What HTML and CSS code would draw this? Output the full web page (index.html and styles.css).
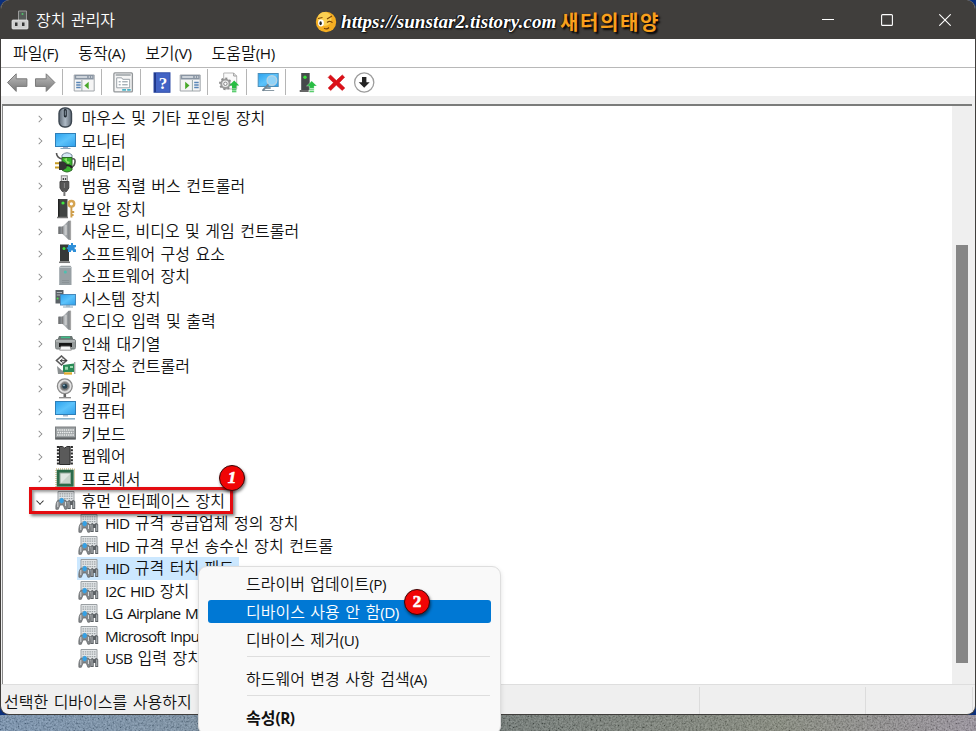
FILE: index.html
```
<!DOCTYPE html>
<html lang="ko">
<head>
  <meta charset="UTF-8" />
  <title>장치 관리자</title>
  <link rel="stylesheet" href="styles.css">
</head>
<body>

<!-- icon set -->
<svg class="defs" aria-hidden="true">
  <defs>
    <linearGradient id="gBlue" x1="0" y1="0" x2="1" y2="1"><stop offset="0" stop-color="#2ba2ee"/><stop offset="0.5" stop-color="#5cc3fb"/><stop offset="1" stop-color="#2f9fea"/></linearGradient>
    <linearGradient id="gGrey" x1="0" y1="0" x2="1" y2="0"><stop offset="0" stop-color="#5d6266"/><stop offset="0.5" stop-color="#b9bdc0"/><stop offset="1" stop-color="#686c6f"/></linearGradient>
    <linearGradient id="gArrow" x1="0" y1="0" x2="0" y2="1"><stop offset="0" stop-color="#bdbdbd"/><stop offset="1" stop-color="#777"/></linearGradient>
    <linearGradient id="gMouse" x1="0" y1="0" x2="1" y2="0"><stop offset="0" stop-color="#5d6874"/><stop offset="0.5" stop-color="#aebac6"/><stop offset="1" stop-color="#5d6874"/></linearGradient>

    <symbol id="mouse" viewBox="0 0 21 21">
      <rect x="4" y="1" width="12.5" height="19" rx="5.5" fill="url(#gMouse)" stroke="#3c4650" stroke-width="1.4"/>
      <rect x="8.8" y="2" width="3" height="8.5" rx="1.4" fill="#202831"/>
      <path d="M10.3 3.5v5" stroke="#8996a3"/>
    </symbol>
    <symbol id="monitor" viewBox="0 0 21 21">
      <rect x="0.5" y="3.5" width="20" height="13" fill="url(#gBlue)" stroke="#2e7fb8"/>
      <path d="M8 17h5v1.5H8z" fill="#9ac"/><path d="M5.5 18.5h10" stroke="#8aa7bd"/>
    </symbol>
    <symbol id="battery" viewBox="0 0 21 21">
      <path d="M7 6V3q5-4.5 10 0v3z" fill="#d5e8f5" stroke="#789"/>
      <path d="M7 5.5h10V18q-5 4-10 0z" fill="#39b52e" stroke="#2c6a25"/>
      <path d="M17 7q3.4-1 3 3t-3 5M1.5 1q0 4.5 5.5 6" fill="none" stroke="#555" stroke-width="1.6"/>
      <path d="M0 11.3h5M0 15.6h5" stroke="#c79c23" stroke-width="2"/>
      <path d="M4 9.5h4.5l3 2v4.5l-3 2H4z" fill="#333"/><path d="M11 13.5q4-1 6 2.5" fill="none" stroke="#222" stroke-width="2"/>
      <path d="M9 7l3-1v3l3 1-2 2z" fill="#8de06a"/>
    </symbol>
    <symbol id="usb" viewBox="0 0 21 21">
      <rect x="6.3" y="0.8" width="6" height="6" fill="#e2e2e2" stroke="#888"/>
      <path d="M7.7 3H9v2H7.7zM9.9 3h1.3v2H9.9z" fill="#444"/>
      <path d="M5 6.5h8.8v6.5l-2.3 3.5H7.3L5 13z" fill="#555" stroke="#444"/>
      <path d="M9.4 16v5" stroke="#777" stroke-width="2"/><path d="M9.4 8v5" stroke="#888"/>
    </symbol>
    <symbol id="security" viewBox="0 0 21 21">
      <path d="M3 1h9.5v18H3z" fill="#414443"/><path d="M3 1h1.5v18H3z" fill="#222"/>
      <circle cx="8" cy="5" r="1.6" fill="#3fe83f"/><path d="M2 19.5h11" stroke="#777" stroke-width="1.6"/>
      <circle cx="16.4" cy="5.8" r="2.8" fill="none" stroke="#d5a452" stroke-width="2.4"/>
      <path d="M16.4 9v10.5M16.4 14h2.8M16.4 17h2.2" stroke="#cf9f4c" stroke-width="1.9"/>
    </symbol>
    <symbol id="speaker" viewBox="0 0 21 21">
      <path d="M3.5 6.5h4L13.5 0.8H16v19h-2.5L7.5 14h-4z" fill="url(#gGrey)"/>
      <path d="M7.7 6.5V14M4 7v7" stroke="#777"/><path d="M15.3 1v18.5" stroke="#a5a5a5" stroke-width="1.6"/>
      <path d="M11 5v10" stroke="#ddd"/>
    </symbol>
    <symbol id="component" viewBox="0 0 21 21">
      <path d="M5 1.5h9v17H5z" fill="#353837"/><circle cx="9" cy="5.5" r="1.5" fill="#3fdc3f"/>
      <path d="M4 19.3h11" stroke="#777" stroke-width="1.5"/>
      <path d="M13 2h3V0h2v2h3v2.3h-1.3v2H21V9h-3V7.6h-2V9h-3V6.3h-1.2v-2H13z" fill="#2e8fd8"/>
    </symbol>
    <symbol id="software" viewBox="0 0 21 21">
      <path d="M6 0.7h9.5l1 1.5V20H4V2.2z" fill="#98a0a4"/><path d="M4 2.5h12.5" stroke="#bdc4c7"/>
      <path d="M4.5 3v16.5" stroke="#adb4b8"/><circle cx="10.3" cy="7" r="1.5" fill="#4dc0b1"/>
      <path d="M7 15.5h7M7 17.5h7" stroke="#8a9296"/>
    </symbol>
    <symbol id="system" viewBox="0 0 21 21">
      <path d="M0.5 2h8v13.5h-8z" fill="#5a6166"/><path d="M1.8 4.5H7M1.8 7H7" stroke="#b2b8bc"/>
      <circle cx="2.6" cy="10.5" r="1" fill="#4be14b"/>
      <rect x="5.5" y="6.5" width="15" height="10.5" fill="url(#gBlue)" stroke="#4688ba"/>
      <path d="M11 17.3h4v1h-4zM8 18.4h10v1H8z" fill="#8ba6b8"/>
    </symbol>
    <symbol id="printer" viewBox="0 0 21 21">
      <path d="M4 3h13l2 5H2z" fill="#6a7673"/><path d="M6 4.4h9" stroke="#3fbd88" stroke-width="1.6"/>
      <rect x="0.5" y="6.5" width="20" height="9.5" rx="1.5" fill="#969b9b" stroke="#7a8080"/>
      <path d="M1 8h19" stroke="#c8cccc"/><path d="M4 10h13v4H4z" fill="#161616"/>
      <path d="M6 13.2h9l1.3 4H4.7z" fill="#f7f7f7" stroke="#777" stroke-width=".7"/>
    </symbol>
    <symbol id="storage" viewBox="0 0 21 21">
      <path d="M6.5 1l5 4.5-5 4.5-5-4.5z" fill="#f6f6f6" stroke="#5a5a5a" stroke-width="1.6"/>
      <path d="M5 5.7h7M7.5 4L5.5 5.7l2 1.8" fill="none" stroke="#333"/>
      <path d="M2 11l5 4.5h3v3.5H3z" fill="#8a8f90"/>
      <path d="M8 10l11-1.5V17H8z" fill="#298a56"/><path d="M10 11.7h3v3h-3zM15 11h3v2h-3z" fill="#9ad9ad"/>
      <path d="M9 17.3h8v2.3H9z" fill="#e0ab2e"/><path d="M19.8 7v12" stroke="#888"/>
    </symbol>
    <symbol id="camera" viewBox="0 0 21 21">
      <circle cx="9.8" cy="8.3" r="7.4" fill="#e2e2e2" stroke="#8a8a8a" stroke-width="1.3"/>
      <circle cx="9.8" cy="8.3" r="4.6" fill="#777" stroke="#a5a5a5"/><circle cx="9.8" cy="8.3" r="2.5" fill="#24404f"/>
      <circle cx="9" cy="7.3" r=".9" fill="#9bc5de"/>
      <path d="M8.5 16h2.6v3H8.5z" fill="#666"/><path d="M4 19.7h12" stroke="#888" stroke-width="1.3"/>
    </symbol>
    <symbol id="computer" viewBox="0 0 21 21">
      <rect x="0.5" y="1.5" width="20" height="13" fill="url(#gBlue)" stroke="#2e7fb8"/>
      <path d="M8 15h5v1.5H8z" fill="#abc"/><path d="M1 18.8h19" stroke="#8ab1c8" stroke-width="1.6"/>
    </symbol>
    <symbol id="keyboard" viewBox="0 0 21 21">
      <rect x="0.5" y="4" width="20" height="12" fill="#9ca1a3" stroke="#7c8082"/>
      <path d="M2 7h17M2.5 9.5h16M2 12h17" stroke="#eceeee" stroke-width="1.5" stroke-dasharray="1.5 .7"/>
      <path d="M.5 15.4h20" stroke="#5c6062" stroke-width="2"/>
    </symbol>
    <symbol id="firmware" viewBox="0 0 21 21">
      <path d="M4.5 1.5h3q2 3 4.6 0h3v18H4.5z" fill="#5a5a5a" stroke="#2c2c2c"/>
      <path d="M3 1v19M16.8 1v19" stroke="#2c2c2c" stroke-width="2.2" stroke-dasharray="2 1.3"/>
    </symbol>
    <symbol id="cpu" viewBox="0 0 21 21">
      <rect x="1" y="1" width="18.5" height="18.5" fill="none" stroke="#b79a52" stroke-dasharray="1 1"/>
      <rect x="1.7" y="1.7" width="17" height="17" fill="#2b6b49"/>
      <rect x="5" y="5" width="10.5" height="10.5" fill="#e0e7e2" stroke="#93aa9b"/><path d="M6 15l9-9v9z" fill="#c8d4cb"/>
    </symbol>
    <symbol id="hid" viewBox="0 0 21 21">
      <path d="M3 1.5h16v10H3z" fill="#e2e5e7" stroke="#9a9fa2"/>
      <path d="M4.5 3.8h13M4.5 6.2h13M4.5 8.6h13" stroke="#9da3a6" stroke-width="1.2" stroke-dasharray="1.5 .8"/>
      <path d="M.9 19.3q-.6-7 2.4-9.3h7q2.6 2 1.8 9l-2.2.3-1.7-4.3H5l-1.7 4.3z" fill="#85898c" stroke="#5c5f62" stroke-width=".7"/>
      <path d="M4.5 9.5l2.1-1.8L8.7 9v3l-2.1 1.5L4.5 12z" fill="#35a0e4"/>
      <path d="M12.5 19v-7.5q1.8-3.2 3.5 0 2.2-3.2 4.2 0V19h-3v-4h-1.5v4z" fill="#5c6165"/>
      <path d="M14 11.5V18M18.8 11.5V18" stroke="#bbbfc2"/><path d="M2.8 12v5M10.5 12v4" stroke="#d5d8da"/>
    </symbol>

    <symbol id="back" viewBox="0 0 21 21">
      <path d="M0.8 10.5L9.5 1.8v5h10.7v7.6H9.5v5z" fill="url(#gArrow)" stroke="#7b7b7b" stroke-linejoin="round"/>
    </symbol>
    <symbol id="forward" viewBox="0 0 21 21">
      <path d="M20.2 10.5L11.5 1.8v5H.8v7.6h10.7v5z" fill="url(#gArrow)" stroke="#7b7b7b" stroke-linejoin="round"/>
    </symbol>
    <symbol id="tree-pane" viewBox="0 0 21 21">
      <path d="M.5 3h20v16H.5z" fill="#f5f5f5" stroke="#a0a5aa"/><path d="M1 3h19v4.5H1z" fill="#8995a3"/>
      <path d="M2.5 5h11" stroke="#e5e9ed" stroke-width="1.4"/><path d="M15 5h4" stroke="#fff" stroke-dasharray="1.3 1"/>
      <path d="M2.5 10.5H7M2.5 13H7M2.5 15.5H7" stroke="#5885b6" stroke-width="1.4"/><path d="M8.2 8v11" stroke="#9aa"/>
      <path d="M15 9.8v7.4l-4.3-3.7z" fill="#48a829"/>
    </symbol>
    <symbol id="action-pane" viewBox="0 0 21 21">
      <path d="M.5 3h20v16H.5z" fill="#f5f5f5" stroke="#a0a5aa"/><path d="M1 3h19v4.5H1z" fill="#8995a3"/>
      <path d="M2.5 5h11" stroke="#e5e9ed" stroke-width="1.4"/><path d="M15 5h4" stroke="#fff" stroke-dasharray="1.3 1"/>
      <path d="M14.5 10.5H19M14.5 13H19M14.5 15.5H19" stroke="#5885b6" stroke-width="1.4"/><path d="M12.7 8v11" stroke="#9aa"/>
      <path d="M5.5 9.8v7.4l4.3-3.7z" fill="#48a829"/>
    </symbol>
    <symbol id="properties" viewBox="0 0 21 21">
      <rect x="1.2" y=".9" width="18.5" height="19" rx="1" fill="#f5f5f5" stroke="#929699" stroke-width="1.3"/>
      <path d="M3 3h15" stroke="#9aa0a5" stroke-width="1.6"/>
      <path d="M4 5.8h5l1 1.5h7v8.5H4z" fill="#fff" stroke="#9aa2a8"/>
      <path d="M6 9.8h2M9.5 9.8H15M6 12.8h2M9.5 12.8H15" stroke="#84929c"/><path d="M9.5 17.8h3.8M14.5 17.8H18" stroke="#48b3c8" stroke-width="1.8"/>
    </symbol>
    <symbol id="help" viewBox="0 0 21 21">
      <rect x="2.3" y=".8" width="16" height="19.5" fill="#4263c5" stroke="#3450a8"/><path d="M3.4 1v19" stroke="#1c3483" stroke-width="1.6"/>
      <text x="11.3" y="16.7" text-anchor="middle" class="help-mark">?</text>
    </symbol>
    <symbol id="update" viewBox="0 0 21 21">
      <path d="M5 1h10l3 3v13H5z" fill="#fafafa" stroke="#b5b5b5"/><path d="M15 1v3h3" fill="none" stroke="#999"/>
      <circle cx="6.7" cy="11.8" r="4.2" fill="#eee" stroke="#9c9c9c" stroke-width="2"/>
      <circle cx="6.7" cy="11.8" r="5.5" fill="none" stroke="#8c8c8c" stroke-width="1.7" stroke-dasharray="2 2.2"/>
      <circle cx="6.7" cy="11.8" r="1.7" fill="#fff" stroke="#888"/>
      <path d="M15.5 8.5l5 5h-2.8v3h-4.4v-3h-2.8zM13.3 17.3h4.4v1.2h-4.4zM13.3 19.2h4.4v1h-4.4z" fill="#28bd43"/>
    </symbol>
    <symbol id="scan" viewBox="0 0 21 21">
      <rect x=".5" y="1.5" width="20" height="13" fill="url(#gBlue)" stroke="#4d8fb9"/>
      <path d="M8 15h5v2H8zM4.5 18h12v1H4.5z" fill="#8a9aa5"/>
      <circle cx="14.2" cy="8.5" r="4.8" fill="#8fd2f7" stroke="#b5d3e4" stroke-width="1.4"/><path d="M10.7 12.3L5 18.7" stroke="#708594" stroke-width="2"/>
    </symbol>
    <symbol id="enable" viewBox="0 0 21 21">
      <path d="M4.5 1H13v17H4.5z" fill="#454a4b"/><circle cx="8.3" cy="5.3" r="1.7" fill="#39e33a"/>
      <path d="M3 19h9" stroke="#666" stroke-width="1.8"/>
      <path d="M15 9l5.2 5h-2.8v2.4h-4.8V14H9.8zM12.6 17.2h4.8v1.3h-4.8zM12.6 19.1h4.8v1.2h-4.8z" fill="#28bd43" stroke="#fff" stroke-width=".3"/>
    </symbol>
    <symbol id="remove" viewBox="0 0 21 21">
      <path d="M4.8 3l5.8 5.6L16.6 3l2.3 2.2-5.3 5.5 5.5 5.3-2.6 2.4-5.9-5.3L5 18.5 2.5 16l5.3-5.3-5.3-5.3z" fill="#dc1018" stroke="#c80c14" stroke-width=".6"/>
    </symbol>
    <symbol id="disable" viewBox="0 0 21 21">
      <circle cx="10.5" cy="10.5" r="9.6" fill="#fff" stroke="#9d9d9d" stroke-width="1.3"/>
      <path d="M8.3 5h4.4v5.3H16l-5.5 5.5L5 10.3h3.3z" fill="#242424"/>
    </symbol>
    <filter id="noise" x="0" y="0" width="1" height="1">
      <feTurbulence type="fractalNoise" baseFrequency="0.55" numOctaves="2" seed="4"/>
      <feColorMatrix values="1.6 0 0 0 -.3  1.6 0 0 0 -.3  1.6 0 0 0 -.3  0 0 0 0 .3"/>
    </filter>
  </defs>
</svg>

<div class="desktop">
  <svg class="grain" width="976" height="17"><rect width="976" height="17" filter="url(#noise)"/></svg>

  <div class="window">
    <header class="titlebar">
      <svg class="app-icon" viewBox="0 0 18 20">
        <path d="M7.5 1h8v10h-8z" fill="#555b58" stroke="#999"/><circle cx="11.5" cy="4" r="1" fill="#52c26b"/>
        <rect x="1" y="10" width="16" height="9" rx="1" fill="#cfcfcf" stroke="#eee" stroke-width=".7"/>
        <path d="M4 12.5h2.5V16H4zM11 12.5h2.5V16H11z" fill="#343434"/>
      </svg>
      <h1>장치 관리자</h1>
      <div class="controls">
        <svg viewBox="0 0 12 12"><path d="M0 5.5h12"/></svg>
        <svg viewBox="0 0 12 12"><rect x=".6" y=".6" width="10.8" height="10.8" rx="1"/></svg>
        <svg viewBox="0 0 12 12"><path d="M.3.3l11.4 11.4M11.7.3L.3 11.7"/></svg>
      </div>
      <div class="watermark">
        <svg viewBox="0 0 22 22">
          <circle cx="11" cy="11" r="10.2" fill="#f5ae22"/><circle cx="9.5" cy="8" r="7" fill="#fcd052"/>
          <ellipse cx="6" cy="12" rx="2.9" ry="3.4" fill="#fff"/><ellipse cx="5.6" cy="12.3" rx="1.2" ry="2" fill="#222"/>
          <path d="M12 11.5q3-2.5 5.5.2M3 7.5l4.5-1M12 8l5-3M9 17.3q3 1.6 5-.8" fill="none" stroke="#7c4608" stroke-width="1.2"/>
        </svg>
        <span class="url">https://sunstar2.tistory.com</span>
        <span class="name">새터의태양</span>
      </div>
    </header>

    <nav class="menubar">
      <span>파일<i>(F)</i></span>
      <span>동작<i>(A)</i></span>
      <span>보기<i>(V)</i></span>
      <span>도움말<i>(H)</i></span>
    </nav>

    <div class="toolbar">
      <svg><use href="#back"/></svg>
      <svg><use href="#forward"/></svg>
      <hr>
      <svg><use href="#tree-pane"/></svg>
      <hr>
      <svg><use href="#properties"/></svg>
      <hr>
      <svg><use href="#help"/></svg>
      <svg><use href="#action-pane"/></svg>
      <hr>
      <svg><use href="#update"/></svg>
      <hr>
      <svg><use href="#scan"/></svg>
      <hr>
      <svg><use href="#enable"/></svg>
      <svg><use href="#remove"/></svg>
      <svg><use href="#disable"/></svg>
    </div>

    <main class="content">
      <ul class="tree">
        <li><svg><use href="#mouse"/></svg><span>마우스 및 기타 포인팅 장치</span></li>
        <li><svg><use href="#monitor"/></svg><span>모니터</span></li>
        <li><svg><use href="#battery"/></svg><span>배터리</span></li>
        <li><svg><use href="#usb"/></svg><span>범용 직렬 버스 컨트롤러</span></li>
        <li><svg><use href="#security"/></svg><span>보안 장치</span></li>
        <li><svg><use href="#speaker"/></svg><span>사운드, 비디오 및 게임 컨트롤러</span></li>
        <li><svg><use href="#component"/></svg><span>소프트웨어 구성 요소</span></li>
        <li><svg><use href="#software"/></svg><span>소프트웨어 장치</span></li>
        <li><svg><use href="#system"/></svg><span>시스템 장치</span></li>
        <li><svg><use href="#speaker"/></svg><span>오디오 입력 및 출력</span></li>
        <li><svg><use href="#printer"/></svg><span>인쇄 대기열</span></li>
        <li><svg><use href="#storage"/></svg><span>저장소 컨트롤러</span></li>
        <li><svg><use href="#camera"/></svg><span>카메라</span></li>
        <li><svg><use href="#computer"/></svg><span>컴퓨터</span></li>
        <li><svg><use href="#keyboard"/></svg><span>키보드</span></li>
        <li><svg><use href="#firmware"/></svg><span>펌웨어</span></li>
        <li><svg><use href="#cpu"/></svg><span>프로세서</span></li>
        <li class="open"><svg><use href="#hid"/></svg><span>휴먼 인터페이스 장치</span></li>
        <li class="child"><svg><use href="#hid"/></svg><span><i>HID</i> 규격 공급업체 정의 장치</span></li>
        <li class="child"><svg><use href="#hid"/></svg><span><i>HID</i> 규격 무선 송수신 장치 컨트롤</span></li>
        <li class="child selected"><svg><use href="#hid"/></svg><span><i>HID</i> 규격 터치 패드</span></li>
        <li class="child"><svg><use href="#hid"/></svg><span><i>I2C HID</i> 장치</span></li>
        <li class="child"><svg><use href="#hid"/></svg><span><i>LG Airplane M</i></span></li>
        <li class="child"><svg><use href="#hid"/></svg><span><i>Microsoft Inpu</i></span></li>
        <li class="child"><svg><use href="#hid"/></svg><span><i>USB</i> 입력 장치</span></li>
      </ul>
      <div class="scrollbar"><div class="thumb"></div></div>
    </main>

    <footer class="statusbar">
      <span>선택한 디바이스를 사용하지</span>
      <span></span>
      <span></span>
    </footer>
  </div>

  <div class="context-menu">
    <div class="item">드라이버 업데이트<i>(P)</i></div>
    <div class="item active">디바이스 사용 안 함<i>(D)</i></div>
    <div class="item">디바이스 제거<i>(U)</i></div>
    <hr>
    <div class="item">하드웨어 변경 사항 검색<i>(A)</i></div>
    <hr>
    <div class="item default">속성<i>(R)</i></div>
  </div>

  <!-- step markers -->
  <div class="frame"></div>
  <div class="step step-1">1</div>
  <div class="step step-2">2</div>
</div>

</body>
</html>
```
FILE: styles.css
```
* {
  box-sizing: border-box;
}
body {
  margin: 0;
  font-family: "Noto Sans CJK KR", sans-serif;
  font-size: 16px;
  font-weight: 350;
  line-height: 22px;
  word-spacing: 1px;
  color: #111;
}
.defs {
  position: absolute;
  width: 0;
  height: 0;
}
i {
  font-family: "Open Sans", "Noto Sans", sans-serif;
  font-size: 15.3px;
  font-style: normal;
  font-weight: 400;
  letter-spacing: -0.8px;
  word-spacing: 1.5px;
}
.desktop {
  position: relative;
  width: 976px;
  height: 731px;
  overflow: hidden;
  background: linear-gradient(90deg, #6585a8 0%, #688196 25%, #5c6661 52%, #74796a 80%, #8d8592 100%);
}
.grain {
  position: absolute;
  left: 0;
  bottom: 0;
}

/* Window */
.window {
  position: relative;
  display: flex;
  flex-direction: column;
  height: 715px;
  border: 1px solid #403e3c;
  border-top: 0;
  border-radius: 9px;
  overflow: hidden;
  background: #efefef;
  box-shadow: 0 0 0 12px #0a2f7c;
  clip-path: inset(0 0 0 0);
}
.titlebar {
  display: flex;
  align-items: center;
  height: 39px;
  padding-left: 10px;
  background: #403e3c;
  color: #fff;
}
.app-icon {
  width: 18px;
  height: 20px;
}
.titlebar h1 {
  margin: -2px 0 0 7px;
  font-size: 16px;
  font-weight: 350;
}
.controls {
  display: flex;
  gap: 46.5px;
  margin: 1px 24px 0 auto;
}
.controls svg {
  width: 12px;
  height: 12px;
  fill: none;
  stroke: #fff;
  stroke-width: 1.1;
}
.watermark {
  position: absolute;
  left: 314px;
  top: 9px;
  display: flex;
  align-items: center;
  height: 26px;
  white-space: nowrap;
}
.watermark svg {
  width: 22px;
  height: 22px;
}
.watermark .url {
  width: 219px;
  margin-left: 4px;
  font: italic bold 19px "Liberation Serif", serif;
  letter-spacing: 0.1px;
  text-shadow: 1px 1px 2px #000, -1px 0 1px #000;
}
.watermark .name {
  font-size: 20px;
  font-weight: 700;
  letter-spacing: 1.6px;
  color: #f9a01c;
  text-shadow: 2px 2px 2px #000, -1px 0 1px #43220a;
}
.menubar {
  display: flex;
  height: 28px;
  padding-left: 12px;
  gap: 20px;
  background: #fff;
  line-height: 27px;
}
.menubar span {
  white-space: nowrap;
}
.menubar i {
  letter-spacing: -0.4px;
}
.toolbar {
  display: flex;
  align-items: center;
  height: 29px;
  padding-left: 2px;
  border-top: 1px solid #b8b8b8;
  background: #fff;
}
.toolbar svg {
  width: 28.4px;
  height: 21px;
}
.toolbar hr {
  width: 1px;
  height: 26px;
  margin: 0 7px 0 2.5px;
  border: 0;
  background: #b5b5b5;
}

/* Device tree */
.content {
  display: flex;
  flex: 1;
  margin: 8px 3px 0 1px;
  border-top: 2px solid #7b7c7b;
  border-left: 1px solid #8a8a8a;
  background: #fff;
}
.tree {
  flex: 1;
  margin: 0.7px 0 0;
  padding: 0;
  list-style: none;
}
.tree li {
  display: flex;
  align-items: center;
  height: 22.52px;
  padding-left: 34px;
  white-space: nowrap;
}
.tree li::before {
  content: "";
  width: 5px;
  height: 5px;
  margin-right: 12px;
  border: solid #8a8a8a;
  border-width: 1.2px 1.2px 0 0;
  transform: translate(-1px, 1px) rotate(45deg) scale(0.8);
}
.tree li.open::before {
  border-color: #333;
  transform: rotate(135deg) scale(0.9);
}
.tree li.child {
  padding-left: 75px;
}
.tree li.child::before {
  display: none;
}
.tree svg {
  flex: none;
  width: 21px;
  height: 21px;
}
.tree li:not(.child) svg {
  margin-left: -0.5px;
}
.tree span {
  margin-top: -1px;
  padding-left: 6px;
}
.tree .selected {
  width: 236px;
  background: linear-gradient(#cce8ff, #cce8ff) 74px 0 / 162px 100% no-repeat;
}
.scrollbar {
  width: 20px;
  padding: 139px 4px 0;
  background: #efefef;
}
.thumb {
  height: 418px;
  background: #868686;
}
.statusbar {
  display: flex;
  height: 30px;
  padding-top: 2px;
  border-top: 1px solid #dedede;
  line-height: 28px;
}
.statusbar span {
  border-right: 1px solid #dcdcdc;
}
.statusbar span:nth-child(1) {
  width: 699px;
  padding-left: 3px;
}
.statusbar span:nth-child(2) {
  width: 166px;
}
.statusbar span:nth-child(3) {
  width: 107px;
}

/* Context menu */
.context-menu {
  position: absolute;
  left: 198px;
  top: 566px;
  width: 303px;
  height: 169px;
  padding: 5px 9px;
  border: 1px solid #dedede;
  border-radius: 9px;
  background: #f9f9f9;
  box-shadow: 0 2px 5px rgba(0, 0, 0, 0.12);
}
.item {
  height: 23px;
  margin-bottom: 5px;
  padding-left: 38px;
  border-radius: 3px;
  line-height: 22px;
  white-space: nowrap;
}
.item i {
  letter-spacing: -0.5px;
}
.item.active {
  background: #0078d4;
  color: #fff;
}
.item.default,
.item.default i {
  font-weight: 700;
}
.context-menu hr {
  height: 1px;
  margin: 4px 1px 10px 39px;
  border: 0;
  background: #dedede;
}

/* Step markers */
.frame {
  position: absolute;
  left: 29px;
  top: 487px;
  width: 204px;
  height: 27px;
  border: 3.5px solid #e40b10;
  box-shadow: 2px 2px 3px rgba(0, 0, 0, 0.5), inset 2px 2px 3px rgba(0, 0, 0, 0.4);
}
.step {
  position: absolute;
  width: 26px;
  height: 26px;
  border: 1.5px solid #3c0505;
  border-radius: 50%;
  background: #f00505;
  box-shadow: 1px 2px 3px rgba(0, 0, 0, 0.5);
  color: #fff;
  font: bold 17px/23px "Liberation Serif", serif;
  text-align: center;
  -webkit-text-stroke: 0.6px #fff;
}
.step-1 {
  left: 219px;
  top: 465px;
  font-style: italic;
}
.step-2 {
  left: 404px;
  top: 589px;
}
.help-mark {
  font: bold 17px "Liberation Serif", serif;
  fill: #fff;
}
```
